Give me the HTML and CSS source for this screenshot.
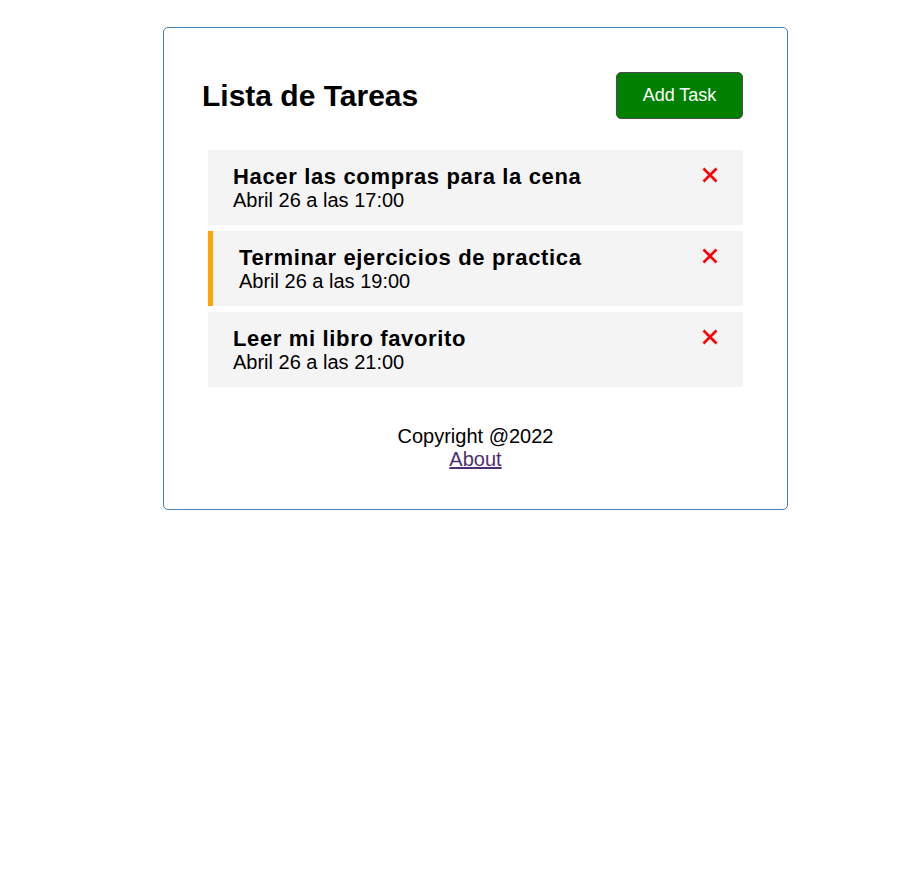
FILE: index.html
```html
<!DOCTYPE html>
<html lang="es">
<head>
<meta charset="utf-8">
<title>Lista de Tareas</title>
<link rel="stylesheet" href="styles.css">
</head>
<body>
<div class="container">
  <header class="header">
    <h1 class="title">Lista de Tareas</h1>
    <button class="btn">Add Task</button>
  </header>
  <div class="tasks">
    <div class="task">
      <div class="task-head">
        <h3 class="task-title">Hacer las compras para la cena</h3>
        <svg class="del" viewBox="0 0 16 16" width="16" height="16"><path d="M1.5 1.5 L14.5 14.5 M14.5 1.5 L1.5 14.5" stroke="#ff0000" stroke-width="2.6" fill="none"/></svg>
      </div>
      <p class="task-day">Abril 26 a las 17:00</p>
    </div>
    <div class="task reminder">
      <div class="task-head">
        <h3 class="task-title">Terminar ejercicios de practica</h3>
        <svg class="del" viewBox="0 0 16 16" width="16" height="16"><path d="M1.5 1.5 L14.5 14.5 M14.5 1.5 L1.5 14.5" stroke="#ff0000" stroke-width="2.6" fill="none"/></svg>
      </div>
      <p class="task-day">Abril 26 a las 19:00</p>
    </div>
    <div class="task">
      <div class="task-head">
        <h3 class="task-title">Leer mi libro favorito</h3>
        <svg class="del" viewBox="0 0 16 16" width="16" height="16"><path d="M1.5 1.5 L14.5 14.5 M14.5 1.5 L1.5 14.5" stroke="#ff0000" stroke-width="2.6" fill="none"/></svg>
      </div>
      <p class="task-day">Abril 26 a las 21:00</p>
    </div>
  </div>
  <footer class="footer">
    <p>Copyright @2022</p>
    <a href="#" class="about">About</a>
  </footer>
</div>
</body>
</html>
```
FILE: styles.css
```css
* {
  box-sizing: border-box;
}

body {
  margin: 0;
  font-family: "Liberation Sans", Arial, sans-serif;
  background: #fff;
  color: #000;
}

.container {
  width: 625px;
  height: 483px;
  margin: 27px 0 0 163px;
  border: 1px solid #4682b4;
  border-radius: 5px;
  padding: 44px 44px 0 38px;
}

.header {
  display: flex;
  justify-content: space-between;
  align-items: center;
  height: 47px;
}

.title {
  margin: 0;
  font-size: 30px;
  line-height: 36px;
  font-weight: bold;
}

.btn {
  width: 127px;
  height: 47px;
  background: #008000;
  color: #fff;
  border: 1px solid #4d4d4d;
  border-radius: 5px;
  font-family: "Liberation Sans", Arial, sans-serif;
  font-size: 18px;
  padding: 0;
}

.tasks {
  margin: 31px 0 0 6px;
}

.task {
  background: #f4f4f4;
  height: 75px;
  padding: 14px 25px 0 25px;
  margin-bottom: 6px;
}

.task.reminder {
  border-left: 5px solid #ffa500;
  padding-left: 26px;
}

.task-head {
  display: flex;
  justify-content: space-between;
  align-items: center;
}

.task-title {
  margin: 0;
  font-size: 22px;
  line-height: 25px;
  font-weight: bold;
  letter-spacing: 0.65px;
}

.del {
  display: block;
  margin-top: -4px;
}

.task-day {
  margin: 0;
  font-size: 20px;
  line-height: 23px;
}

.footer {
  margin: 38px 0 0 6px;
  text-align: center;
  font-size: 20px;
  line-height: 23px;
}

.footer p {
  margin: 0;
}

.about {
  color: #4f2f73;
}
```
